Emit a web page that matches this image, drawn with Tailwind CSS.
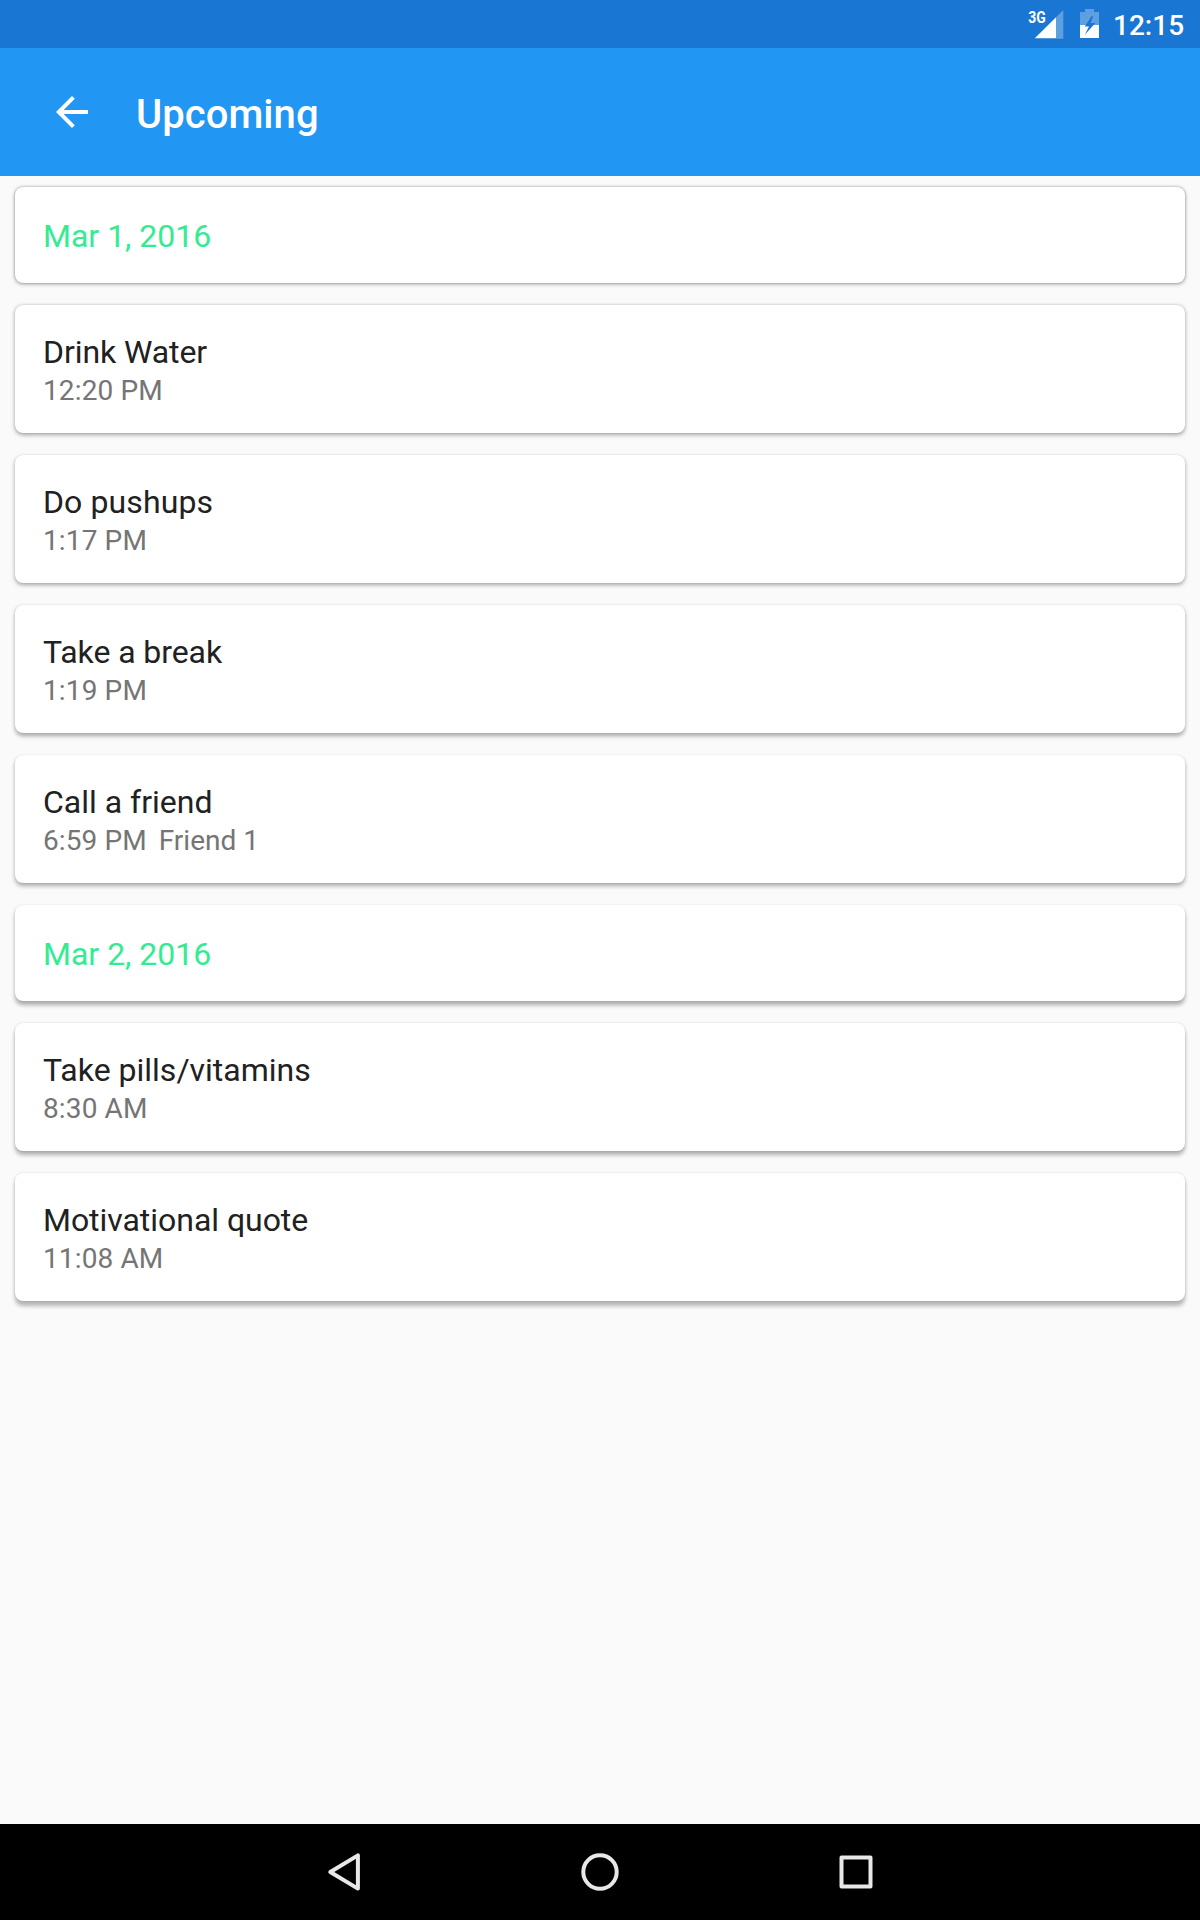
<!DOCTYPE html>
<html lang="en">
<head>
<meta charset="utf-8">
<title>Upcoming</title>
<script src="https://cdn.jsdelivr.net/npm/@tailwindcss/browser@4"></script>
</head>
<body class="flex h-[1920px] w-[1200px] flex-col overflow-hidden bg-[#fafafa] font-[Roboto,sans-serif] text-[#212121]">
  <div class="flex h-12 shrink-0 justify-end bg-[#1976d2] pr-4 text-white">
    <svg class="h-12 w-[90px] shrink-0" viewBox="1024 0 90 48">
      <text x="1028.3" y="22.6" textLength="17.5" lengthAdjust="spacingAndGlyphs" font-size="17" font-weight="700" fill="#fff">3G</text>
      <path d="M1063.3 10V38.7H1056V17.3Z" fill="#fff" fill-opacity=".3"/>
      <path d="M1056 17.3V38.3H1034.8Z" fill="#fff"/>
      <path d="M1085 9h9v3h5v13h-19V12h5z" fill="#fff" fill-opacity=".3"/>
      <path d="M1080 25h19v13h-19z" fill="#fff"/>
      <path d="M1091.5 16.3 1084.8 26.6H1089L1084.8 34.8 1095.4 23H1090.6L1093.2 16.3Z" fill="#1976d2"/>
    </svg>
    <span class="-ml-px w-[71px] pt-px text-[28px] leading-[49px] font-medium">12:15</span>
  </div>
  <header class="flex h-32 shrink-0 items-center bg-[#2196f3] pl-12 text-white">
    <svg class="size-12" viewBox="0 0 24 24" fill="currentColor"><path d="M20 11H7.83l5.59-5.59L12 4l-8 8 8 8 1.41-1.41L7.83 13H20z"/></svg>
    <h1 class="pt-1.5 pl-10 text-[40px] leading-[48px] font-medium tracking-[0.05px]">Upcoming</h1>
  </header>
  <main class="flex grow flex-col gap-[22px] px-[15px] pt-[11px] text-[32px] leading-[38px]">
    <h2 class="h-24 rounded-lg bg-white px-7 pt-[30px] text-[#33ec91] shadow-[0_1px_4px_rgba(0,0,0,0.35),0_0_2px_rgba(0,0,0,0.3)]">Mar 1, 2016</h2>
    <article class="h-32 rounded-lg bg-white px-7 pt-7 shadow-[0_1.5px_4px_rgba(0,0,0,0.35),0_0_1px_rgba(0,0,0,0.2)]">
      <h3 class="tracking-[-0.08px]">Drink Water</h3><p class="text-[28px] leading-[40px] tracking-[0.13px] text-[#757575]">12:20 PM</p>
    </article>
    <article class="h-32 rounded-lg bg-white px-7 pt-7 shadow-[0_2px_4px_rgba(0,0,0,0.35),0_0_1px_rgba(0,0,0,0.15)]">
      <h3 class="tracking-[0.1px]">Do pushups</h3><p class="text-[28px] leading-[40px] tracking-[0.13px] text-[#757575]">1:17 PM</p>
    </article>
    <article class="h-32 rounded-lg bg-white px-7 pt-7 shadow-[0_2.5px_4px_rgba(0,0,0,0.33),0_0_1px_rgba(0,0,0,0.15)]">
      <h3 class="tracking-[-0.08px]">Take a break</h3><p class="text-[28px] leading-[40px] tracking-[0.13px] text-[#757575]">1:19 PM</p>
    </article>
    <article class="h-32 rounded-lg bg-white px-7 pt-7 shadow-[0_3px_4px_rgba(0,0,0,0.32),0_0_1px_rgba(0,0,0,0.15)]">
      <h3>Call a friend</h3><p class="flex gap-3 text-[28px] leading-[40px] text-[#757575]"><span class="tracking-[0.1px]">6:59 PM</span><span>Friend 1</span></p>
    </article>
    <h2 class="h-24 rounded-lg bg-white px-7 pt-[30px] text-[#33ec91] shadow-[0_3.5px_4px_rgba(0,0,0,0.32),0_0_1px_rgba(0,0,0,0.15)]">Mar 2, 2016</h2>
    <article class="h-32 rounded-lg bg-white px-7 pt-7 shadow-[0_4px_4px_rgba(0,0,0,0.3),0_0_2px_rgba(0,0,0,0.15)]">
      <h3>Take pills/vitamins</h3><p class="text-[28px] leading-[40px] tracking-[0.13px] text-[#757575]">8:30 AM</p>
    </article>
    <article class="h-32 rounded-lg bg-white px-7 pt-7 shadow-[0_4.5px_4px_rgba(0,0,0,0.28),0_0_2px_rgba(0,0,0,0.15)]">
      <h3 class="tracking-[-0.04px]">Motivational quote</h3><p class="text-[28px] leading-[40px] tracking-[0.13px] text-[#757575]">11:08 AM</p>
    </article>
  </main>
  <nav class="flex h-24 shrink-0 items-center justify-center gap-52 bg-black text-[#e8e8e8]">
    <svg class="size-12" viewBox="0 0 48 48" fill="none" stroke="currentColor" stroke-width="4" stroke-linejoin="round"><path d="M37.9 7.4V40.6L10.3 24Z"/></svg>
    <svg class="size-12" viewBox="0 0 48 48" fill="none" stroke="currentColor" stroke-width="4"><circle cx="24" cy="24" r="16.7"/></svg>
    <svg class="size-12" viewBox="0 0 48 48" fill="none" stroke="currentColor" stroke-width="4" stroke-linejoin="round"><rect x="9.5" y="9.5" width="29" height="29"/></svg>
  </nav>
</body>
</html>
